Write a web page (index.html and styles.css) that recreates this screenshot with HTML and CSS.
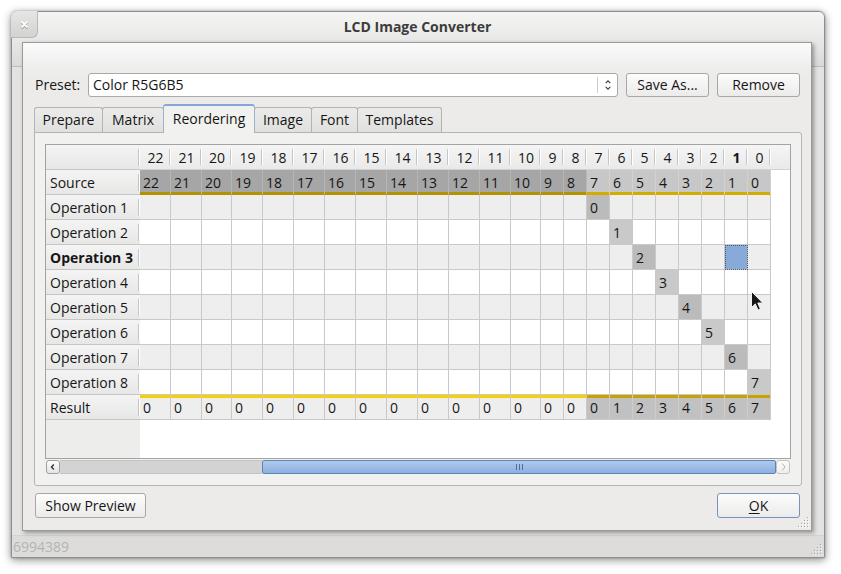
FILE: index.html
```html
<!DOCTYPE html>
<html>
<head>
<meta charset="utf-8">
<title>LCD Image Converter</title>
<link rel="stylesheet" href="styles.css">
</head>
<body>
<div class="window">
  <div class="titlebar">
    <div class="close">
      <svg width="9" height="9" viewBox="0 0 9 9"><path d="M1.5 2.5l6 6M7.5 2.5l-6 6" stroke="#9a9a9a" stroke-width="2"/><path d="M1.5 1.5l6 6M7.5 1.5l-6 6" stroke="#fafafa" stroke-width="1.8"/></svg>
    </div>
    <div class="title">LCD Image Converter</div>
  </div>
  <div class="main">
    <div class="dialog">
      <div class="preset-row">
        <span class="label">Preset:</span>
        <div class="combo">
          <span class="combo-text">Color R5G6B5</span>
          <span class="combo-arrow"><svg width="6" height="12" viewBox="0 0 6 12"><path d="M0.7 4.2L3 1.8L5.3 4.2M0.7 7.8L3 10.2L5.3 7.8" fill="none" stroke="#3a3a3a" stroke-width="1.1"/></svg></span>
        </div>
        <button class="btn">Save As...</button>
        <button class="btn">Remove</button>
      </div>
      <div class="tabs">
        <div class="tab t-prepare">Prepare</div>
        <div class="tab t-matrix">Matrix</div>
        <div class="tab t-reorder active">Reordering</div>
        <div class="tab t-image">Image</div>
        <div class="tab t-font">Font</div>
        <div class="tab t-templates">Templates</div>
      </div>
      <div class="pane">
        <div class="table">
          <div class="grid">
            <div class="row hdr"><span class="vh"></span><span>22</span><span>21</span><span>20</span><span>19</span><span>18</span><span>17</span><span>16</span><span>15</span><span>14</span><span>13</span><span>12</span><span>11</span><span>10</span><span>9</span><span>8</span><span>7</span><span>6</span><span>5</span><span>4</span><span>3</span><span>2</span><span class="b">1</span><span>0</span><span class="f"></span></div>
            <div class="row src"><span class="vh">Source</span><span>22</span><span>21</span><span>20</span><span>19</span><span>18</span><span>17</span><span>16</span><span>15</span><span>14</span><span>13</span><span>12</span><span>11</span><span>10</span><span>9</span><span>8</span><span class="l">7</span><span class="l">6</span><span class="l">5</span><span class="l">4</span><span class="l">3</span><span class="l">2</span><span class="l">1</span><span class="l">0</span><span class="f"></span></div>
            <div class="row alt"><span class="vh">Operation 1</span>
              <span></span><span></span><span></span><span></span><span></span>
              <span></span><span></span><span></span><span></span><span></span>
              <span></span><span></span><span></span><span></span><span></span>
              <span class="m">0</span>
              <span></span><span></span><span></span><span></span><span></span><span></span><span></span>
              <span class="f"></span></div>
            <div class="row"><span class="vh">Operation 2</span>
              <span></span><span></span><span></span><span></span><span></span>
              <span></span><span></span><span></span><span></span><span></span>
              <span></span><span></span><span></span><span></span><span></span>
              <span></span>
              <span class="m">1</span>
              <span></span><span></span><span></span><span></span><span></span><span></span>
              <span class="f"></span></div>
            <div class="row alt"><span class="vh b">Operation 3</span>
              <span></span><span></span><span></span><span></span><span></span>
              <span></span><span></span><span></span><span></span><span></span>
              <span></span><span></span><span></span><span></span><span></span>
              <span></span><span></span>
              <span class="m">2</span>
              <span></span><span></span><span></span>
              <span class="sel"></span>
              <span></span>
              <span class="f"></span></div>
            <div class="row"><span class="vh">Operation 4</span>
              <span></span><span></span><span></span><span></span><span></span>
              <span></span><span></span><span></span><span></span><span></span>
              <span></span><span></span><span></span><span></span><span></span>
              <span></span><span></span><span></span>
              <span class="m">3</span>
              <span></span><span></span><span></span><span></span>
              <span class="f"></span></div>
            <div class="row alt"><span class="vh">Operation 5</span>
              <span></span><span></span><span></span><span></span><span></span>
              <span></span><span></span><span></span><span></span><span></span>
              <span></span><span></span><span></span><span></span><span></span>
              <span></span><span></span><span></span><span></span>
              <span class="m">4</span>
              <span></span><span></span><span></span>
              <span class="f"></span></div>
            <div class="row"><span class="vh">Operation 6</span>
              <span></span><span></span><span></span><span></span><span></span>
              <span></span><span></span><span></span><span></span><span></span>
              <span></span><span></span><span></span><span></span><span></span>
              <span></span><span></span><span></span><span></span><span></span>
              <span class="m">5</span>
              <span></span><span></span>
              <span class="f"></span></div>
            <div class="row alt"><span class="vh">Operation 7</span>
              <span></span><span></span><span></span><span></span><span></span>
              <span></span><span></span><span></span><span></span><span></span>
              <span></span><span></span><span></span><span></span><span></span>
              <span></span><span></span><span></span><span></span><span></span>
              <span></span>
              <span class="m">6</span>
              <span></span>
              <span class="f"></span></div>
            <div class="row"><span class="vh">Operation 8</span>
              <span></span><span></span><span></span><span></span><span></span>
              <span></span><span></span><span></span><span></span><span></span>
              <span></span><span></span><span></span><span></span><span></span>
              <span></span><span></span><span></span><span></span><span></span>
              <span></span><span></span>
              <span class="m">7</span>
              <span class="f"></span></div>
            <div class="row alt res"><span class="vh">Result</span><span>0</span><span>0</span><span>0</span><span>0</span><span>0</span><span>0</span><span>0</span><span>0</span><span>0</span><span>0</span><span>0</span><span>0</span><span>0</span><span>0</span><span>0</span><span class="d">0</span><span class="d">1</span><span class="d">2</span><span class="d">3</span><span class="d">4</span><span class="d">5</span><span class="d">6</span><span class="d">7</span><span class="f"></span></div>
          </div>
        </div>
        <div class="hscroll">
          <div class="sb-btn"><svg width="12" height="12" viewBox="0 0 12 12"><path d="M6.8 3.5L4.5 6L6.8 8.5" fill="none" stroke="#2e2e2e" stroke-width="1.3"/></svg></div>
          <div class="trough"></div>
          <div class="thumb"><svg width="8" height="6" viewBox="0 0 8 6"><path d="M1.5 0v6M4.5 0v6M7.5 0v6" stroke="#4f6f9c" stroke-width="1"/></svg></div>
          <div class="sb-btn disabled"><svg width="12" height="12" viewBox="0 0 12 12"><path d="M5.2 2.5L8 6L5.2 9.5" fill="none" stroke="#b4b4b4" stroke-width="1"/></svg></div>
        </div>
      </div>
      <div class="bottom-row">
        <button class="btn preview">Show Preview</button>
        <button class="btn ok"><u>O</u>K</button>
      </div>
      <svg class="grip dialog-grip" width="11" height="11" viewBox="0 0 11 11"><g fill="#fff"><rect x="10" y="1" width="1" height="1"/><rect x="7" y="4" width="1" height="1"/><rect x="10" y="4" width="1" height="1"/><rect x="4" y="7" width="1" height="1"/><rect x="7" y="7" width="1" height="1"/><rect x="10" y="7" width="1" height="1"/><rect x="1" y="10" width="1" height="1"/><rect x="4" y="10" width="1" height="1"/><rect x="7" y="10" width="1" height="1"/><rect x="10" y="10" width="1" height="1"/></g><g fill="#a4a4a4"><rect x="9" y="0" width="1" height="1"/><rect x="6" y="3" width="1" height="1"/><rect x="9" y="3" width="1" height="1"/><rect x="3" y="6" width="1" height="1"/><rect x="6" y="6" width="1" height="1"/><rect x="9" y="6" width="1" height="1"/><rect x="0" y="9" width="1" height="1"/><rect x="3" y="9" width="1" height="1"/><rect x="6" y="9" width="1" height="1"/><rect x="9" y="9" width="1" height="1"/></g></svg>
    </div>
    <div class="status">6994389</div>
  </div>
  <svg class="grip window-grip" width="11" height="11" viewBox="0 0 11 11"><g fill="#f4f4f4"><rect x="10" y="1" width="1" height="1"/><rect x="7" y="4" width="1" height="1"/><rect x="10" y="4" width="1" height="1"/><rect x="4" y="7" width="1" height="1"/><rect x="7" y="7" width="1" height="1"/><rect x="10" y="7" width="1" height="1"/><rect x="1" y="10" width="1" height="1"/><rect x="4" y="10" width="1" height="1"/><rect x="7" y="10" width="1" height="1"/><rect x="10" y="10" width="1" height="1"/></g><g fill="#a4a4a4"><rect x="9" y="0" width="1" height="1"/><rect x="6" y="3" width="1" height="1"/><rect x="9" y="3" width="1" height="1"/><rect x="3" y="6" width="1" height="1"/><rect x="6" y="6" width="1" height="1"/><rect x="9" y="6" width="1" height="1"/><rect x="0" y="9" width="1" height="1"/><rect x="3" y="9" width="1" height="1"/><rect x="6" y="9" width="1" height="1"/><rect x="9" y="9" width="1" height="1"/></g></svg>
</div>
<svg class="cursor" width="13" height="20" viewBox="0 0 13 20"><path d="M0.5 0.5V16.5L4.3 12.9L7 19L9.4 18L6.8 12H11.8Z" fill="#161616" stroke="#f0f0f0" stroke-width="1"/></svg>
</body>
</html>
```

FILE: styles.css
```css
* { box-sizing: border-box; }
html, body { margin: 0; padding: 0; }
body {
  width: 841px;
  height: 574px;
  overflow: hidden;
  position: relative;
  background: #ffffff;
  font-family: "Open Sans", "Noto Sans", sans-serif;
  font-size: 14px;
  color: #161616;
}

.window {
  position: relative;
  margin: 11px 0 0 11px;
  width: 814px;
  height: 547px;
  border: 1px solid #8f8f8f;
  border-radius: 6px 6px 0 0;
  background: linear-gradient(to bottom, #f5f5f4 0, #e7e7e6 30px, #dadad9 54px, #bdbdbd 54px, #bdbdbd 55px, #e3e3e2 55px);
  box-shadow: 0 2px 9px rgba(0, 0, 0, 0.45), 0 0 2px rgba(0, 0, 0, 0.3);
  display: flex;
  flex-direction: column;
}

.titlebar {
  height: 30px;
  display: flex;
  align-items: flex-start;
  padding-right: 27px;
}
.close {
  width: 27px;
  height: 27px;
  margin-top: -1px;
  margin-left: -1px;
  border-right: 1px solid #b9b9b9;
  border-bottom: 1px solid #b9b9b9;
  border-radius: 6px 0 6px 0;
  background: linear-gradient(#e6e6e5, #d2d2d1);
  display: flex;
  align-items: center;
  justify-content: center;
}
.title {
  flex: 1;
  text-align: center;
  font-weight: 700;
  color: #3c3c3c;
  line-height: 30px;
  font-size: 14px;
}

.main {
  flex: 1;
  display: flex;
  flex-direction: column;
}

.dialog {
  position: relative;
  margin-left: 10px;
  width: 790px;
  height: 489px;
  border: 1px solid #9a9a9a;
  background: linear-gradient(to bottom, #fbfbfb 0, #eeeeed 24px, #ecebea 40px);
  box-shadow: 2px 2px 4px rgba(0, 0, 0, 0.35);
  padding: 30px 9px 12px 11px;
  display: flex;
  flex-direction: column;
}

.preset-row {
  height: 24px;
  display: flex;
  align-items: stretch;
  padding-right: 2px;
}
.label {
  width: 54px;
  padding-left: 1px;
  line-height: 24px;
}
.combo {
  flex: 1;
  display: flex;
  background: #ffffff;
  border: 1px solid #a9a9a9;
  border-radius: 3px;
  margin-right: 8px;
}
.combo-text {
  flex: 1;
  padding-left: 4px;
  line-height: 22px;
}
.combo-arrow {
  width: 20px;
  margin: 3px 0;
  border-left: 1px solid #cdcdcd;
  display: flex;
  align-items: center;
  justify-content: center;
}

.btn {
  font-family: inherit;
  font-size: 14px;
  color: #161616;
  padding: 0;
  width: 83px;
  background: linear-gradient(#fcfcfc, #ebebea);
  border: 1px solid #a7a7a7;
  border-radius: 3px;
  line-height: 22px;
}
.preset-row .btn + .btn { margin-left: 8px; }

.tabs {
  margin-top: 7px;
  height: 28px;
  display: flex;
  align-items: flex-end;
  position: relative;
  z-index: 1;
}
.tab {
  height: 25px;
  margin-right: -1px;
  border: 1px solid #b3b3b3;
  border-bottom: none;
  border-radius: 3px 3px 0 0;
  background: linear-gradient(#ebebeb, #e0e0df);
  text-align: center;
  line-height: 24px;
}
.tab.active {
  height: 29px;
  margin-bottom: -1px;
  background: #f1f1f0;
  border-color: #9eb2cc;
  border-top: 2px solid #86a7d6;
  line-height: 25px;
  position: relative;
  z-index: 2;
}
.t-prepare { width: 69px; }
.t-matrix { width: 62px; }
.t-reorder { width: 92px; }
.t-image { width: 58px; }
.t-font { width: 47px; }
.t-templates { width: 85px; }

.pane {
  height: 354px;
  border: 1px solid #b4b4b4;
  border-radius: 0 3px 3px 3px;
  background: #f1f1f0;
  padding: 11px 10px 11px 10px;
}

.table {
  height: 315px;
  border: 1px solid #a3a3a3;
  background: linear-gradient(to right, #ededec 94px, #ffffff 94px);
}
.grid {
  display: grid;
  grid-template-columns: 94px 31px 31px 30px repeat(9, 31px) 30px repeat(10, 23px) 1fr;
  grid-auto-rows: 25px;
}
.row { display: contents; }
.row > span {
  background: #ffffff;
  border-right: 1px solid #c9c9c9;
  border-bottom: 1px solid #c9c9c9;
  line-height: 24px;
  padding-top: 1px;
  padding-left: 3px;
  white-space: nowrap;
  overflow: hidden;
}
.alt > span { background: #eeeeee; }

.hdr > span {
  border-right: none;
  border-bottom: 1px solid #d2d2d2;
  text-align: center;
  padding: 1px 0 0 0;
  background:
    linear-gradient(#c6c6c6, #c6c6c6) no-repeat right 1px center / 1px 16px,
    linear-gradient(#ffffff, #ffffff) no-repeat right 0 center / 1px 16px,
    linear-gradient(#f5f5f5, #e9e9e9);
}

.src > span {
  background: #a6a6a6;
  border-right-color: #b6b6b6;
  border-bottom-color: #b19300;
  box-shadow: inset 0 -2px #b19300;
}
.src > .l {
  background: #c7c7c7;
  border-right-color: #d2d2d2;
  border-bottom-color: #d4ac00;
  box-shadow: inset 0 -2px #d4ac00;
}

.res > span {
  background: #eeeeee;
  box-shadow: inset 0 3px #f8d200;
}
.res > .d {
  background: #c1c1c1;
  border-right-color: #cdcdcd;
  box-shadow: inset 0 3px #c9a200;
}

.row > .m { background: #c9c9c9; }
.alt > .m { background: #bbbbbb; }
.row > .sel {
  background: #88aad9;
  outline: 1px dotted #4a5a70;
  outline-offset: -1px;
}

.row > .f {
  border: none;
  background: #ffffff;
  box-shadow: none;
}
.hdr > .f {
  background: linear-gradient(#f5f5f5, #e9e9e9);
  border-bottom: 1px solid #d2d2d2;
}

.row > .vh {
  border-right: none;
  border-bottom: 1px solid #c6c6c6;
  box-shadow: none;
  padding-left: 4px;
  text-align: left;
  background:
    linear-gradient(#c4c4c4, #c4c4c4) no-repeat right 1px center / 1px 17px,
    linear-gradient(#ffffff, #ffffff) no-repeat right 0 center / 1px 17px,
    linear-gradient(#f4f4f4, #e7e7e6);
}
.b { font-weight: 700; }

.hscroll {
  margin: 1px 1px 0 1px;
  height: 14px;
  display: flex;
}
.sb-btn {
  width: 14px;
  border: 1px solid #9f9f9f;
  border-radius: 3px;
  background: linear-gradient(#fdfdfd, #e4e4e4);
  display: flex;
  align-items: center;
  justify-content: center;
}
.sb-btn.disabled {
  border-color: #c3c3c3;
  background: linear-gradient(#fbfbfb, #efefef);
}
.trough {
  width: 202px;
  background: #d3d3d3;
  border-top: 1px solid #c3c3c3;
  border-bottom: 1px solid #c3c3c3;
}
.thumb {
  flex: 1;
  border: 1px solid #5f84b8;
  border-radius: 2px;
  background: linear-gradient(#afc9ec, #8db0df);
  display: flex;
  align-items: center;
  justify-content: center;
}

.bottom-row {
  margin-top: 7px;
  height: 25px;
  display: flex;
  justify-content: space-between;
  padding: 0 2px 0 1px;
}
.preview { width: 111px; }
.ok {
  width: 83px;
  border-color: #7893b9;
}
.ok u { text-decoration-thickness: 1px; text-underline-offset: 2px; }

.status {
  margin-top: 4px;
  height: 22px;
  border-top: 1px solid #d2d2d1;
  background: #dddcdb;
  color: #b4b4b4;
  line-height: 21px;
  padding-left: 1px;
}

.grip { position: absolute; }
.dialog-grip { right: 2px; bottom: 2px; }
.window-grip { right: 2px; bottom: 2px; }

.cursor {
  position: absolute;
  left: 751px;
  top: 291px;
}
```
